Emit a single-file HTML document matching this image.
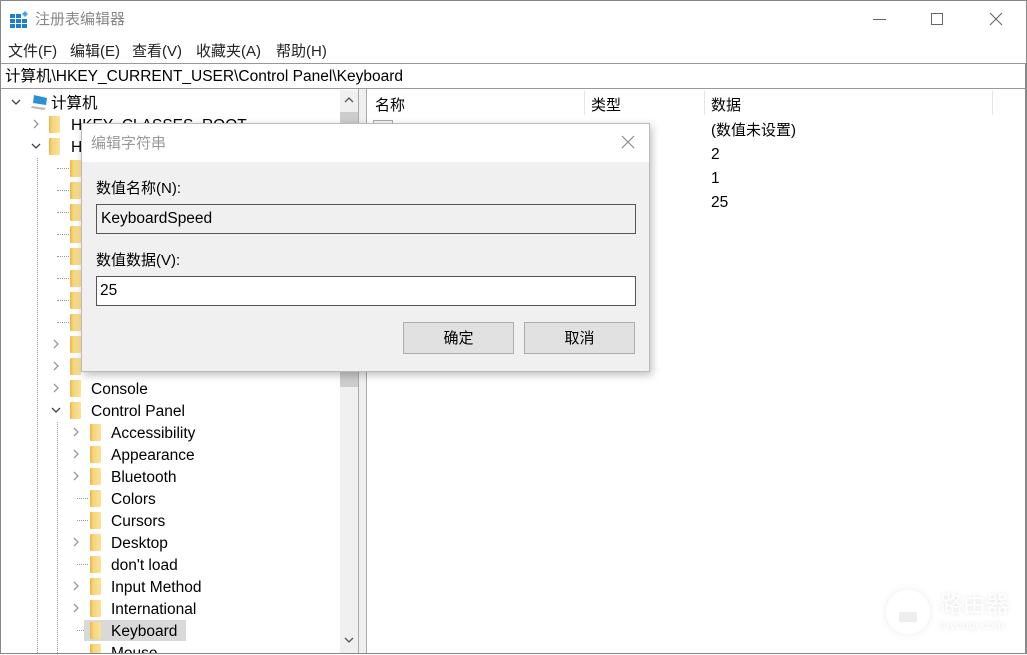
<!DOCTYPE html>
<html><head><meta charset="utf-8"><style>
*{margin:0;padding:0;box-sizing:border-box}
body{width:1027px;height:655px;background:#fff;position:relative;overflow:hidden;font-family:"Liberation Sans","Noto Sans CJK SC",sans-serif;color:#000}
.a{position:absolute;white-space:nowrap}
.t{font-size:15.5px;line-height:22px;margin-top:2px}
.f{position:absolute;width:11px;height:17px;background:linear-gradient(90deg,#e8b64a 0,#f7d57a 30%,#fbe29a 100%);border-radius:1px}
.cv{position:absolute;width:10px;height:10px}
.dv{position:absolute;width:1px;border-left:1px dotted #999}
.dh{position:absolute;height:1px;border-top:1px dotted #999}
</style></head><body>
<div class="a" style="left:0;top:0;width:1027px;height:655px;border:1px solid #888"></div>
<svg class="a" style="left:10px;top:10px" width="20" height="20" viewBox="0 0 20 20">
<g fill="#1a7fd0"><rect x="0" y="4" width="5" height="4"/><rect x="6" y="4" width="5" height="4"/><rect x="0" y="9" width="5" height="4"/><rect x="6" y="9" width="5" height="4"/><rect x="12" y="9" width="5" height="4"/><rect x="0" y="14" width="5" height="4"/><rect x="6" y="14" width="5" height="4"/><rect x="12" y="14" width="5" height="4"/></g><path d="M15 1 L18 4 L15 7 L12 4Z" fill="#4aa3e8"/></svg>
<div class="a" style="left:35px;top:10px;font-size:15px;color:#888;line-height:20px">注册表编辑器</div>
<div class="a" style="left:873px;top:19px;width:13px;height:1px;background:#666"></div>
<div class="a" style="left:931px;top:13px;width:12px;height:12px;border:1px solid #666"></div>
<svg class="a" style="left:989px;top:12px" width="14" height="14"><path d="M1 1L13 13M13 1L1 13" stroke="#666" stroke-width="1.1"/></svg>
<div class="a" style="left:8px;top:42px;font-size:15px;line-height:20px;color:#222">文件(F)</div>
<div class="a" style="left:70px;top:42px;font-size:15px;line-height:20px;color:#222">编辑(E)</div>
<div class="a" style="left:132px;top:42px;font-size:15px;line-height:20px;color:#222">查看(V)</div>
<div class="a" style="left:196px;top:42px;font-size:15px;line-height:20px;color:#222">收藏夹(A)</div>
<div class="a" style="left:276px;top:42px;font-size:15px;line-height:20px;color:#222">帮助(H)</div>
<div class="a" style="left:1px;top:63px;width:1025px;height:26px;border:1px solid #999;border-left:none;border-right:1px solid #888"></div>
<div class="a" style="left:5px;top:67px;font-size:15.5px;line-height:20px">计算机\HKEY_CURRENT_USER\Control Panel\Keyboard</div>
<div class="a" style="left:1px;top:89px;width:358px;height:565px;border-right:1px solid #aaa;border-bottom:1px solid #888"></div>
<div class="a" style="left:366px;top:89px;width:660px;height:565px;border-left:1px solid #aaa;border-bottom:1px solid #888;border-right:1px solid #888"></div>
<div class="a" style="left:359px;top:89px;width:7px;height:565px;background:#f0f0f0"></div>
<div class="a" style="left:340px;top:90px;width:18px;height:563px;background:#f0f0f0"></div>
<div class="a" style="left:340px;top:112px;width:18px;height:275px;background:#cdcdcd"></div>
<svg class="a" style="left:344px;top:96px" width="10" height="8"><path d="M1 6L5 2L9 6" stroke="#555" fill="none" stroke-width="1.3"/></svg>
<svg class="a" style="left:344px;top:636px" width="10" height="8"><path d="M1 2L5 6L9 2" stroke="#555" fill="none" stroke-width="1.3"/></svg>
<div class="dv" style="left:37px;top:158px;height:497px"></div>
<div class="dv" style="left:57px;top:422px;height:233px"></div>
<div class="dh" style="left:57px;top:168px;width:12px"></div>
<div class="dh" style="left:57px;top:190px;width:12px"></div>
<div class="dh" style="left:57px;top:212px;width:12px"></div>
<div class="dh" style="left:57px;top:234px;width:12px"></div>
<div class="dh" style="left:57px;top:256px;width:12px"></div>
<div class="dh" style="left:57px;top:278px;width:12px"></div>
<div class="dh" style="left:57px;top:300px;width:12px"></div>
<div class="dh" style="left:57px;top:322px;width:12px"></div>
<div class="dh" style="left:77px;top:498px;width:11px"></div>
<div class="dh" style="left:77px;top:520px;width:11px"></div>
<div class="dh" style="left:77px;top:564px;width:11px"></div>
<div class="dh" style="left:77px;top:630px;width:11px"></div>
<svg class="cv" style="left:11px;top:97px"><path d="M1 3L5 7L9 3" stroke="#444" fill="none" stroke-width="1.3"/></svg>
<svg class="a" style="left:30px;top:93px" width="20" height="18"><path d="M4 2L17 5L16 12L3 10Z" fill="#2d8fd8"/><path d="M2 13L16 15L14 17L1 15Z" fill="#bbb"/></svg>
<div class="a t" style="left:51px;top:91px">计算机</div>
<svg class="cv" style="left:31px;top:119px"><path d="M3 1L7 5L3 9" stroke="#999" fill="none" stroke-width="1.3"/></svg>
<div class="f" style="left:49px;top:116px"></div>
<div class="a t" style="left:71px;top:113px">HKEY_CLASSES_ROOT</div>
<svg class="cv" style="left:31px;top:141px"><path d="M1 3L5 7L9 3" stroke="#444" fill="none" stroke-width="1.3"/></svg>
<div class="f" style="left:49px;top:138px"></div>
<div class="a t" style="left:71px;top:135px">H</div>
<div class="f" style="left:70px;top:160px"></div>
<div class="f" style="left:70px;top:182px"></div>
<div class="f" style="left:70px;top:204px"></div>
<div class="f" style="left:70px;top:226px"></div>
<div class="f" style="left:70px;top:248px"></div>
<div class="f" style="left:70px;top:270px"></div>
<div class="f" style="left:70px;top:292px"></div>
<div class="f" style="left:70px;top:314px"></div>
<svg class="cv" style="left:51px;top:339px"><path d="M3 1L7 5L3 9" stroke="#999" fill="none" stroke-width="1.3"/></svg>
<div class="f" style="left:70px;top:336px"></div>
<svg class="cv" style="left:51px;top:361px"><path d="M3 1L7 5L3 9" stroke="#999" fill="none" stroke-width="1.3"/></svg>
<div class="f" style="left:70px;top:358px"></div>
<div class="a t" style="left:91px;top:355px">Cursors</div>
<svg class="cv" style="left:51px;top:383px"><path d="M3 1L7 5L3 9" stroke="#999" fill="none" stroke-width="1.3"/></svg>
<div class="f" style="left:70px;top:380px"></div>
<div class="a t" style="left:91px;top:377px">Console</div>
<svg class="cv" style="left:51px;top:405px"><path d="M1 3L5 7L9 3" stroke="#444" fill="none" stroke-width="1.3"/></svg>
<div class="f" style="left:70px;top:402px"></div>
<div class="a t" style="left:91px;top:399px">Control Panel</div>
<div class="a" style="left:84px;top:620px;width:102px;height:21px;background:#d9d9d9"></div>
<svg class="cv" style="left:71px;top:427px"><path d="M3 1L7 5L3 9" stroke="#999" fill="none" stroke-width="1.3"/></svg>
<div class="f" style="left:90px;top:424px"></div><div class="a t" style="left:111px;top:421px">Accessibility</div>
<svg class="cv" style="left:71px;top:449px"><path d="M3 1L7 5L3 9" stroke="#999" fill="none" stroke-width="1.3"/></svg>
<div class="f" style="left:90px;top:446px"></div><div class="a t" style="left:111px;top:443px">Appearance</div>
<svg class="cv" style="left:71px;top:471px"><path d="M3 1L7 5L3 9" stroke="#999" fill="none" stroke-width="1.3"/></svg>
<div class="f" style="left:90px;top:468px"></div><div class="a t" style="left:111px;top:465px">Bluetooth</div>
<div class="f" style="left:90px;top:490px"></div><div class="a t" style="left:111px;top:487px">Colors</div>
<div class="f" style="left:90px;top:512px"></div><div class="a t" style="left:111px;top:509px">Cursors</div>
<svg class="cv" style="left:71px;top:537px"><path d="M3 1L7 5L3 9" stroke="#999" fill="none" stroke-width="1.3"/></svg>
<div class="f" style="left:90px;top:534px"></div><div class="a t" style="left:111px;top:531px">Desktop</div>
<div class="f" style="left:90px;top:556px"></div><div class="a t" style="left:111px;top:553px">don't load</div>
<svg class="cv" style="left:71px;top:581px"><path d="M3 1L7 5L3 9" stroke="#999" fill="none" stroke-width="1.3"/></svg>
<div class="f" style="left:90px;top:578px"></div><div class="a t" style="left:111px;top:575px">Input Method</div>
<svg class="cv" style="left:71px;top:603px"><path d="M3 1L7 5L3 9" stroke="#999" fill="none" stroke-width="1.3"/></svg>
<div class="f" style="left:90px;top:600px"></div><div class="a t" style="left:111px;top:597px">International</div>
<div class="f" style="left:90px;top:622px"></div><div class="a t" style="left:111px;top:619px">Keyboard</div>
<div class="f" style="left:90px;top:644px;height:9px"></div>
<div class="a" style="left:111px;top:641px;width:60px;height:12px;overflow:hidden"><div class="t">Mouse</div></div>
<div class="a" style="left:0;top:653px;width:1027px;height:2px;background:#fff;border-top:1px solid #888"></div>
<div class="a" style="left:584px;top:91px;width:1px;height:24px;background:#e5e5e5"></div>
<div class="a" style="left:704px;top:91px;width:1px;height:24px;background:#e5e5e5"></div>
<div class="a" style="left:992px;top:91px;width:1px;height:24px;background:#e5e5e5"></div>
<div class="a t" style="left:375px;top:93px;font-size:15px">名称</div>
<div class="a t" style="left:591px;top:93px;font-size:15px">类型</div>
<div class="a t" style="left:711px;top:93px;font-size:15px">数据</div>
<div class="a" style="left:373px;top:120px;width:20px;height:16px;border:1px solid #aaa;background:#f4f4f4"></div>
<div class="a t" style="left:711px;top:118px;font-size:15px">(数值未设置)</div>
<div class="a t" style="left:711px;top:142px">2</div>
<div class="a t" style="left:711px;top:166px">1</div>
<div class="a t" style="left:711px;top:190px">25</div>
<div class="a" style="left:81px;top:123px;width:569px;height:249px;background:#f0f0f0;border:1px solid #bbb;box-shadow:2px 3px 8px rgba(0,0,0,.25)"></div>
<div class="a" style="left:82px;top:124px;width:567px;height:38px;background:#fff"></div>
<div class="a" style="left:91px;top:134px;font-size:15px;line-height:20px;color:#999">编辑字符串</div>
<svg class="a" style="left:621px;top:135px" width="14" height="14"><path d="M1 1L13 13M13 1L1 13" stroke="#888" stroke-width="1.1"/></svg>
<div class="a t" style="left:96px;top:176px;font-size:15px">数值名称(N):</div>
<div class="a" style="left:96px;top:204px;width:540px;height:30px;border:1px solid #555;background:#f0f0f0"></div>
<div class="a t" style="left:101px;top:206px">KeyboardSpeed</div>
<div class="a t" style="left:96px;top:248px;font-size:15px">数值数据(V):</div>
<div class="a" style="left:96px;top:276px;width:540px;height:30px;border:1px solid #555;background:#fff"></div>
<div class="a t" style="left:100px;top:278px">25</div>
<div class="a" style="left:403px;top:322px;width:111px;height:32px;border:1px solid #adadad;background:#e1e1e1;font-size:15px;line-height:32px;text-align:center">确定</div>
<div class="a" style="left:524px;top:322px;width:111px;height:32px;border:1px solid #adadad;background:#e1e1e1;font-size:15px;line-height:32px;text-align:center">取消</div>
<div class="a" style="left:886px;top:590px;width:44px;height:44px;border-radius:50%;background:#fff;box-shadow:0 0 8px rgba(0,0,0,.08)"></div>
<div class="a" style="left:899px;top:612px;width:18px;height:10px;background:#eee;border-radius:2px"></div>
<div class="a" style="left:940px;top:590px;font-size:23px;line-height:28px;color:#fff;text-shadow:0 0 4px rgba(0,0,0,.12)">路由器</div>
<div class="a" style="left:940px;top:618px;font-size:12px;line-height:14px;color:#fff;text-shadow:0 0 4px rgba(0,0,0,.15)">luyouqi.com</div>
</body></html>
